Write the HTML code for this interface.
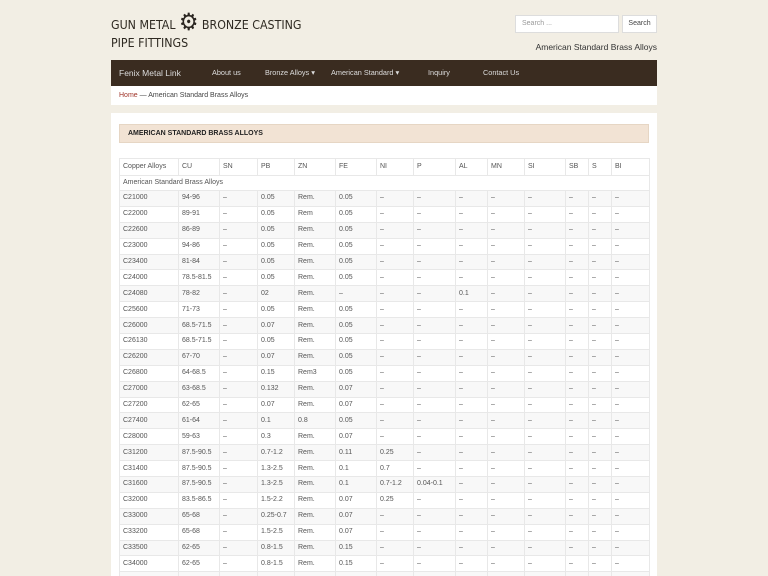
<!DOCTYPE html>
<html><head><meta charset="utf-8"><style>
*{margin:0;padding:0;box-sizing:border-box}
html,body{width:768px;height:576px;overflow:hidden}
body{background:#f2eee4;font-family:"Liberation Sans",sans-serif;color:#333;position:relative}
.title{position:absolute;left:111px;top:15px;font-size:12.3px;line-height:18px;color:#2f2a22;font-family:"DejaVu Sans Condensed","Liberation Sans Narrow","Liberation Sans",sans-serif}
.gear{display:inline-block;vertical-align:-1px;font-size:24px;line-height:14px;color:#2a2520}
.search{position:absolute;left:515px;top:15px;width:104px;height:18px;background:#fff;border:1px solid #ddd;font-size:7px;color:#999;padding:4px 6px}
.sbtn{position:absolute;left:622px;top:15px;width:35px;height:18px;background:#fff;border:1px solid #ddd;font-size:7px;color:#444;text-align:center;line-height:16px}
.tag{position:absolute;right:111px;top:42px;font-size:8.5px;color:#333}
.nav{position:absolute;left:111px;top:60px;width:546px;height:26px;background:#3a2c20;color:#ddd;font-size:7.3px}
.nav span{position:absolute;top:0;line-height:26px}
.crumb{position:absolute;left:111px;top:86px;width:546px;height:19px;background:#fff;font-size:7px;line-height:19px;padding-left:8px;color:#444}
.crumb a{color:#a0352a}
.main{position:absolute;left:111px;top:113px;width:546px;height:463px;background:#fff;overflow:hidden}
.h{position:absolute;left:8px;top:11px;width:530px;height:19px;background:#f2e3d4;border:1px solid #e6d6c4;font-size:7px;font-weight:bold;line-height:17px;padding-left:8px;color:#222}
table{position:absolute;left:8px;top:45px;width:530px;border-collapse:collapse;font-size:7px;color:#555;table-layout:fixed}
td{border:1px solid #e8e8e8;padding:0 3px;height:15.9px;line-height:8px;white-space:nowrap;overflow:hidden}
tr.hd td{height:17px}
tr:nth-child(odd) td{background:#f8f8f8}
tr.hd td,tr.sub td{background:#fff}
</style></head><body>
<div class="title">GUN METAL <span class="gear">⚙</span> BRONZE CASTING<br>PIPE FITTINGS</div>
<div class="search">Search ...</div><div class="sbtn">Search</div>
<div class="tag">American Standard Brass Alloys</div>
<div class="nav"><span style="left:8px;font-size:8.5px">Fenix Metal Link</span><span style="left:101px">About us</span><span style="left:154px">Bronze Alloys ▾</span><span style="left:220px">American Standard ▾</span><span style="left:317px">Inquiry</span><span style="left:372px">Contact Us</span></div>
<div class="crumb"><a>Home</a> — American Standard Brass Alloys</div>
<div class="main"><div class="h">AMERICAN STANDARD BRASS ALLOYS</div>
<table>
<colgroup><col style="width:59px"><col style="width:41px"><col style="width:38px"><col style="width:37px"><col style="width:41px"><col style="width:41px"><col style="width:37px"><col style="width:42px"><col style="width:32px"><col style="width:37px"><col style="width:41px"><col style="width:23px"><col style="width:23px"><col style="width:38px"></colgroup>
<tr class="hd"><td>Copper Alloys</td><td>CU</td><td>SN</td><td>PB</td><td>ZN</td><td>FE</td><td>NI</td><td>P</td><td>AL</td><td>MN</td><td>SI</td><td>SB</td><td>S</td><td>BI</td></tr>
<tr class="sub"><td colspan="14" style="height:15px">American Standard Brass Alloys</td></tr>
<tr><td>C21000</td><td>94-96</td><td>–</td><td>0.05</td><td>Rem.</td><td>0.05</td><td>–</td><td>–</td><td>–</td><td>–</td><td>–</td><td>–</td><td>–</td><td>–</td></tr>
<tr><td>C22000</td><td>89-91</td><td>–</td><td>0.05</td><td>Rem</td><td>0.05</td><td>–</td><td>–</td><td>–</td><td>–</td><td>–</td><td>–</td><td>–</td><td>–</td></tr>
<tr><td>C22600</td><td>86-89</td><td>–</td><td>0.05</td><td>Rem.</td><td>0.05</td><td>–</td><td>–</td><td>–</td><td>–</td><td>–</td><td>–</td><td>–</td><td>–</td></tr>
<tr><td>C23000</td><td>94-86</td><td>–</td><td>0.05</td><td>Rem.</td><td>0.05</td><td>–</td><td>–</td><td>–</td><td>–</td><td>–</td><td>–</td><td>–</td><td>–</td></tr>
<tr><td>C23400</td><td>81-84</td><td>–</td><td>0.05</td><td>Rem.</td><td>0.05</td><td>–</td><td>–</td><td>–</td><td>–</td><td>–</td><td>–</td><td>–</td><td>–</td></tr>
<tr><td>C24000</td><td>78.5-81.5</td><td>–</td><td>0.05</td><td>Rem.</td><td>0.05</td><td>–</td><td>–</td><td>–</td><td>–</td><td>–</td><td>–</td><td>–</td><td>–</td></tr>
<tr><td>C24080</td><td>78-82</td><td>–</td><td>02</td><td>Rem.</td><td>–</td><td>–</td><td>–</td><td>0.1</td><td>–</td><td>–</td><td>–</td><td>–</td><td>–</td></tr>
<tr><td>C25600</td><td>71-73</td><td>–</td><td>0.05</td><td>Rem.</td><td>0.05</td><td>–</td><td>–</td><td>–</td><td>–</td><td>–</td><td>–</td><td>–</td><td>–</td></tr>
<tr><td>C26000</td><td>68.5-71.5</td><td>–</td><td>0.07</td><td>Rem.</td><td>0.05</td><td>–</td><td>–</td><td>–</td><td>–</td><td>–</td><td>–</td><td>–</td><td>–</td></tr>
<tr><td>C26130</td><td>68.5-71.5</td><td>–</td><td>0.05</td><td>Rem.</td><td>0.05</td><td>–</td><td>–</td><td>–</td><td>–</td><td>–</td><td>–</td><td>–</td><td>–</td></tr>
<tr><td>C26200</td><td>67-70</td><td>–</td><td>0.07</td><td>Rem.</td><td>0.05</td><td>–</td><td>–</td><td>–</td><td>–</td><td>–</td><td>–</td><td>–</td><td>–</td></tr>
<tr><td>C26800</td><td>64-68.5</td><td>–</td><td>0.15</td><td>Rem3</td><td>0.05</td><td>–</td><td>–</td><td>–</td><td>–</td><td>–</td><td>–</td><td>–</td><td>–</td></tr>
<tr><td>C27000</td><td>63-68.5</td><td>–</td><td>0.132</td><td>Rem.</td><td>0.07</td><td>–</td><td>–</td><td>–</td><td>–</td><td>–</td><td>–</td><td>–</td><td>–</td></tr>
<tr><td>C27200</td><td>62-65</td><td>–</td><td>0.07</td><td>Rem.</td><td>0.07</td><td>–</td><td>–</td><td>–</td><td>–</td><td>–</td><td>–</td><td>–</td><td>–</td></tr>
<tr><td>C27400</td><td>61-64</td><td>–</td><td>0.1</td><td>0.8</td><td>0.05</td><td>–</td><td>–</td><td>–</td><td>–</td><td>–</td><td>–</td><td>–</td><td>–</td></tr>
<tr><td>C28000</td><td>59-63</td><td>–</td><td>0.3</td><td>Rem.</td><td>0.07</td><td>–</td><td>–</td><td>–</td><td>–</td><td>–</td><td>–</td><td>–</td><td>–</td></tr>
<tr><td>C31200</td><td>87.5-90.5</td><td>–</td><td>0.7-1.2</td><td>Rem.</td><td>0.11</td><td>0.25</td><td>–</td><td>–</td><td>–</td><td>–</td><td>–</td><td>–</td><td>–</td></tr>
<tr><td>C31400</td><td>87.5-90.5</td><td>–</td><td>1.3-2.5</td><td>Rem.</td><td>0.1</td><td>0.7</td><td>–</td><td>–</td><td>–</td><td>–</td><td>–</td><td>–</td><td>–</td></tr>
<tr><td>C31600</td><td>87.5-90.5</td><td>–</td><td>1.3-2.5</td><td>Rem.</td><td>0.1</td><td>0.7-1.2</td><td>0.04-0.1</td><td>–</td><td>–</td><td>–</td><td>–</td><td>–</td><td>–</td></tr>
<tr><td>C32000</td><td>83.5-86.5</td><td>–</td><td>1.5-2.2</td><td>Rem.</td><td>0.07</td><td>0.25</td><td>–</td><td>–</td><td>–</td><td>–</td><td>–</td><td>–</td><td>–</td></tr>
<tr><td>C33000</td><td>65-68</td><td>–</td><td>0.25-0.7</td><td>Rem.</td><td>0.07</td><td>–</td><td>–</td><td>–</td><td>–</td><td>–</td><td>–</td><td>–</td><td>–</td></tr>
<tr><td>C33200</td><td>65-68</td><td>–</td><td>1.5-2.5</td><td>Rem.</td><td>0.07</td><td>–</td><td>–</td><td>–</td><td>–</td><td>–</td><td>–</td><td>–</td><td>–</td></tr>
<tr><td>C33500</td><td>62-65</td><td>–</td><td>0.8-1.5</td><td>Rem.</td><td>0.15</td><td>–</td><td>–</td><td>–</td><td>–</td><td>–</td><td>–</td><td>–</td><td>–</td></tr>
<tr><td>C34000</td><td>62-65</td><td>–</td><td>0.8-1.5</td><td>Rem.</td><td>0.15</td><td>–</td><td>–</td><td>–</td><td>–</td><td>–</td><td>–</td><td>–</td><td>–</td></tr>
<tr><td>&nbsp;</td><td></td><td></td><td></td><td></td><td></td><td></td><td></td><td></td><td></td><td></td><td></td><td></td><td></td></tr>
</table></div>
</body></html>
